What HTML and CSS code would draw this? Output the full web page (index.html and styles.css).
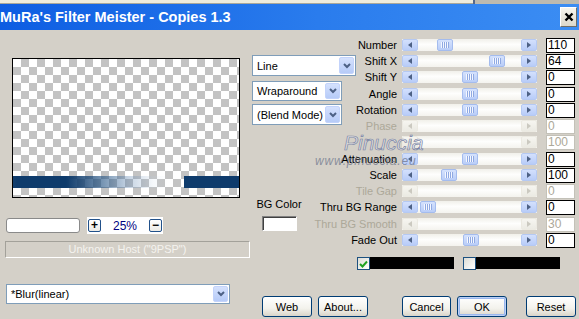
FILE: index.html
```html
<!DOCTYPE html>
<html lang="en">
<head>
  <meta charset="UTF-8" />
  <title>MuRa's Filter Meister - Copies 1.3</title>
  <link rel="stylesheet" href="styles.css">
</head>
<body>
<div class="topstrip"><span class="ts-left"></span><span class="ts-right"></span></div>

<header class="titlebar">
  <span class="title">MuRa's Filter Meister - Copies 1.3</span>
  <span class="close">
    <svg width="10" height="10" viewBox="0 0 10 10"><path d="M1.5 1.5 L8.5 8.5 M8.5 1.5 L1.5 8.5" stroke="#000" stroke-width="2.4" fill="none"/></svg>
  </span>
</header>

<main class="content">
  <div class="left">
    <div class="preview"><div class="bars"></div></div>

    <div class="zoomrow">
      <span class="zoomfield"></span>
      <span class="zoomctl">
        <span class="pm">+</span>
        <span class="pct">25%</span>
        <span class="pm">&minus;</span>
      </span>
    </div>

    <div class="status">Unknown Host ("9PSP")</div>

    <div class="select sel-blur">
      <span class="sel-text">*Blur(linear)</span>
      <span class="sel-arrow"><svg width="8" height="6" viewBox="0 0 8 6"><path d="M1 1 L4 4 L7 1" stroke="#4d6185" stroke-width="2" fill="none"/></svg></span>
    </div>
  </div>

  <div class="right">
    <div class="upper">
      <div class="mid">
        <div class="select sel-line">
          <span class="sel-text">Line</span>
          <span class="sel-arrow"><svg width="8" height="6" viewBox="0 0 8 6"><path d="M1 1 L4 4 L7 1" stroke="#4d6185" stroke-width="2" fill="none"/></svg></span>
        </div>
        <div class="select sel-wrap">
          <span class="sel-text">Wraparound</span>
          <span class="sel-arrow"><svg width="8" height="6" viewBox="0 0 8 6"><path d="M1 1 L4 4 L7 1" stroke="#4d6185" stroke-width="2" fill="none"/></svg></span>
        </div>
        <div class="select sel-blend">
          <span class="sel-text">(Blend Mode)</span>
          <span class="sel-arrow"><svg width="8" height="6" viewBox="0 0 8 6"><path d="M1 1 L4 4 L7 1" stroke="#4d6185" stroke-width="2" fill="none"/></svg></span>
        </div>

        <div class="bgcolor">
          <div class="bg-label">BG Color</div>
          <div class="swatch"></div>
        </div>
      </div>

      <div class="params">
        <div class="prow">
          <span class="plabel">Number</span>
          <span class="slider"><span class="sbtn sl"></span><span class="track"><span class="thumb" style="margin-left: 19px"></span></span><span class="sbtn sr"></span></span>
          <span class="val">110</span>
        </div>
        <div class="prow">
          <span class="plabel">Shift X</span>
          <span class="slider"><span class="sbtn sl"></span><span class="track"><span class="thumb" style="margin-left: 71px"></span></span><span class="sbtn sr"></span></span>
          <span class="val">64</span>
        </div>
        <div class="prow">
          <span class="plabel">Shift Y</span>
          <span class="slider"><span class="sbtn sl"></span><span class="track"><span class="thumb" style="margin-left: 44px"></span></span><span class="sbtn sr"></span></span>
          <span class="val">0</span>
        </div>
        <div class="prow">
          <span class="plabel">Angle</span>
          <span class="slider"><span class="sbtn sl"></span><span class="track"><span class="thumb" style="margin-left: 44px"></span></span><span class="sbtn sr"></span></span>
          <span class="val">0</span>
        </div>
        <div class="prow">
          <span class="plabel">Rotation</span>
          <span class="slider"><span class="sbtn sl"></span><span class="track"><span class="thumb" style="margin-left: 44px"></span></span><span class="sbtn sr"></span></span>
          <span class="val">0</span>
        </div>
        <div class="prow">
          <span class="plabel off">Phase</span>
          <span class="slider off"><span class="sbtn sl"></span><span class="track"></span><span class="sbtn sr"></span></span>
          <span class="val off">0</span>
        </div>
        <div class="prow">
          <span class="plabel off"></span>
          <span class="slider off"><span class="sbtn sl"></span><span class="track"></span><span class="sbtn sr"></span></span>
          <span class="val off">100</span>
        </div>
        <div class="prow">
          <span class="plabel">Attenuation</span>
          <span class="slider"><span class="sbtn sl"></span><span class="track"><span class="thumb" style="margin-left: 44px"></span></span><span class="sbtn sr"></span></span>
          <span class="val">0</span>
        </div>
        <div class="prow">
          <span class="plabel">Scale</span>
          <span class="slider"><span class="sbtn sl"></span><span class="track"><span class="thumb" style="margin-left: 23px"></span></span><span class="sbtn sr"></span></span>
          <span class="val">100</span>
        </div>
        <div class="prow">
          <span class="plabel off">Tile Gap</span>
          <span class="slider off"><span class="sbtn sl"></span><span class="track"></span><span class="sbtn sr"></span></span>
          <span class="val off">0</span>
        </div>
        <div class="prow">
          <span class="plabel">Thru BG Range</span>
          <span class="slider"><span class="sbtn sl"></span><span class="track"><span class="thumb" style="margin-left: 2px"></span></span><span class="sbtn sr"></span></span>
          <span class="val">0</span>
        </div>
        <div class="prow">
          <span class="plabel off">Thru BG Smooth</span>
          <span class="slider off"><span class="sbtn sl"></span><span class="track"></span><span class="sbtn sr"></span></span>
          <span class="val off">30</span>
        </div>
        <div class="prow">
          <span class="plabel">Fade Out</span>
          <span class="slider"><span class="sbtn sl"></span><span class="track"><span class="thumb" style="margin-left: 45px"></span></span><span class="sbtn sr"></span></span>
          <span class="val">0</span>
        </div>
      </div>
    </div>

    <div class="checks">
      <span class="cb on"><svg width="9" height="8" viewBox="0 0 9 8"><path d="M1 4 L3.5 6.5 L8 1.5" stroke="#21a121" stroke-width="2" fill="none"/></svg></span>
      <span class="swbar"></span>
      <span class="cb second"></span>
      <span class="swbar"></span>
    </div>

    <div class="buttons">
      <button class="btn">Web</button>
      <button class="btn about">About...</button>
      <button class="btn cancel">Cancel</button>
      <button class="btn ok">OK</button>
      <button class="btn reset">Reset</button>
    </div>
  </div>

  <div class="watermark">
    <div class="wm-big">Pinuccia</div>
    <div class="wm-small">www.pinuccia.eu</div>
  </div>
</main>
</body>
</html>
```

FILE: styles.css
```css
* { box-sizing: border-box; margin: 0; padding: 0; }
body {
  width: 579px;
  height: 319px;
  overflow: hidden;
  background: #d4d0c8;
  font-family: 'Liberation Sans', Arial, sans-serif;
  font-size: 11px;
  color: #000;
}

/* strip of the window behind */
.topstrip {
  height: 4px;
  display: flex;
}
.ts-left {
  width: 473px;
  background: #efecdc;
  border-bottom: 1px solid #a9a79a;
}
.ts-right {
  flex: 1;
  background: #bdbab0;
  border-left: 2px solid #56688a;
}

/* title bar */
.titlebar {
  height: 26px;
  background: linear-gradient(to right, #0d5de2, #2a7ced 55%, #3b8df3);
  color: #fff;
  display: flex;
  align-items: center;
  justify-content: space-between;
}
.title {
  font-weight: bold;
  font-size: 14.5px;
  white-space: nowrap;
}
.close {
  width: 17px;
  height: 20px;
  margin-right: 2px;
  background: linear-gradient(#f7f5ee, #dcd8cb);
  border: 1px solid #fff;
  border-right-color: #6f6d66;
  border-bottom-color: #6f6d66;
  display: flex;
  align-items: center;
  justify-content: center;
}

/* body */
.content {
  display: flex;
  height: 289px;
  position: relative;
}
.left {
  width: 252px;
}
.preview {
  margin: 28px 0 0 12px;
  width: 228px;
  height: 140px;
  border: 1px solid #000;
  background: conic-gradient(#c3c3c3 25%, #fff 0 50%, #c3c3c3 0 75%, #fff 0);
  background-size: 16px 16px;
}
.bars {
  margin-top: 117px;
  height: 12px;
  background: linear-gradient(to right,
    #14406f 0, #0e3b6c 4px, #0e3b6c 53px,
    rgba(14, 59, 108, 0.85) 66px,
    rgba(30, 80, 130, 0.6) 90px,
    rgba(90, 130, 175, 0.35) 115px,
    rgba(190, 210, 230, 0.15) 140px,
    rgba(255, 255, 255, 0) 155px,
    rgba(255, 255, 255, 0) 171px,
    #0e3b6c 171px, #0e3b6c 100%);
}

.zoomrow {
  margin: 19px 0 0 6px;
  height: 17px;
  display: flex;
  align-items: center;
}
.zoomfield {
  width: 74px;
  height: 15px;
  background: #fff;
  border: 1px solid #8a8a8a;
  border-radius: 3px;
}
.zoomctl {
  margin-left: 7px;
  width: 76px;
  height: 17px;
  background: #fff;
  display: flex;
  align-items: center;
  justify-content: space-between;
  padding: 0 1px;
}
.pm {
  width: 13px;
  height: 13px;
  border: 1px solid #21518a;
  border-radius: 2px;
  background: linear-gradient(#fff, #ecebe6);
  font-size: 12px;
  font-weight: bold;
  line-height: 10px;
  text-align: center;
}
.pct {
  color: #00007f;
  font-size: 12px;
}

.status {
  margin: 7px 0 0 5px;
  width: 245px;
  height: 17px;
  border-top: 1px solid #a3a19a;
  border-left: 1px solid #a3a19a;
  border-bottom: 1px solid #fff;
  border-right: 1px solid #fff;
  color: #f4f3ef;
  text-align: center;
  line-height: 15px;
}

/* combo boxes */
.select {
  display: flex;
  align-items: stretch;
  justify-content: space-between;
  background: #fff;
  border: 1px solid #7f9db9;
  padding: 1px;
  font-size: 11px;
  white-space: nowrap;
}
.sel-text {
  padding-left: 3px;
  align-self: center;
}
.sel-arrow {
  width: 15px;
  flex-shrink: 0;
  background: linear-gradient(#d5e1fd, #b6cbf8);
  border: 1px solid #c3d3fb;
  border-radius: 2px;
  display: flex;
  align-items: center;
  justify-content: center;
}
.sel-blur {
  margin: 26px 0 0 6px;
  width: 224px;
  height: 20px;
}

.right {
  flex: 1;
  display: flex;
  flex-direction: column;
}
.upper {
  display: flex;
  height: 218px;
}
.mid {
  width: 106px;
}
.sel-line {
  margin-top: 25px;
  width: 104px;
  height: 21px;
}
.sel-wrap {
  margin-top: 5px;
  width: 90px;
  height: 20px;
}
.sel-blend {
  margin-top: 3px;
  width: 90px;
  height: 21px;
}
.bgcolor {
  margin-top: 73px;
  width: 54px;
  text-align: center;
}
.bg-label {
  font-size: 11px;
  line-height: 13px;
}
.swatch {
  margin: 5px auto 0;
  width: 35px;
  height: 15px;
  background: #fff;
  border: 1px solid;
  border-color: #808080 #fff #fff #808080;
  box-shadow: inset 1px 1px 0 #404040;
}

/* parameter rows */
.params {
  margin-top: 7px;
  display: flex;
  flex-direction: column;
}
.prow {
  height: 16.25px;
  display: flex;
  align-items: flex-start;
}
.plabel {
  width: 40px;
  margin-right: 4px;
  padding-right: 1px;
  display: flex;
  justify-content: flex-end;
  white-space: nowrap;
  line-height: 16px;
}
.plabel.off {
  color: #aca899;
}
.slider {
  margin-top: 2px;
  width: 135px;
  height: 12px;
  display: flex;
  background: linear-gradient(#f1f0ea, #fefefd 45%, #f4f3ee);
}
.sbtn {
  width: 16px;
  height: 12px;
  background: linear-gradient(#d3e0fd, #b8ccf8);
  border: 1px solid #b5c9f3;
  border-radius: 2px;
  display: flex;
  align-items: center;
  justify-content: center;
}
.sbtn::before {
  content: "";
  border-top: 3px solid transparent;
  border-bottom: 3px solid transparent;
}
.sl::before { border-right: 4px solid #4d6185; }
.sr::before { border-left: 4px solid #4d6185; }
.slider.off .sbtn {
  background: linear-gradient(#f6f5f0, #ebeae3);
  border-color: #eceae2;
}
.slider.off .sl::before { border-right-color: #cbc9c0; }
.slider.off .sr::before { border-left-color: #cbc9c0; }
.track {
  flex: 1;
  display: flex;
  align-items: center;
}
.thumb {
  width: 16px;
  height: 12px;
  background: linear-gradient(#d5e2fd, #b9cdf8);
  border: 1px solid #a4bcee;
  border-radius: 2px;
  display: flex;
  align-items: center;
  justify-content: center;
}
.thumb::after {
  content: "";
  width: 8px;
  height: 6px;
  background: repeating-linear-gradient(to right, #f4f7ff 0 1px, #8fa9e2 1px 2px);
}
.val {
  margin: 1px 0 0 9px;
  width: 29px;
  height: 15px;
  background: #fff;
  border: 1px solid #000;
  font-size: 12px;
  line-height: 13px;
  padding-left: 1px;
}
.val.off {
  border-color: #c3c1b8;
  color: #aca899;
}

/* colour checks */
.checks {
  margin-top: 9px;
  padding-left: 105px;
  display: flex;
  height: 13px;
}
.cb {
  width: 13px;
  height: 13px;
  border: 1px solid #1c5180;
  background: linear-gradient(135deg, #dcdcd5, #fff);
  display: flex;
  align-items: center;
  justify-content: center;
}
.cb.second {
  margin-left: 9px;
}
.swbar {
  width: 84px;
  height: 12px;
  background: #000;
}

/* buttons */
.buttons {
  margin-top: 26px;
  padding-left: 10px;
  display: flex;
}
.btn {
  width: 50px;
  height: 21px;
  border: 1px solid #003c74;
  border-radius: 3px;
  background: linear-gradient(#fff, #f3f2ec 60%, #d9d5c9);
  font-family: 'Liberation Sans', Arial, sans-serif;
  font-size: 11px;
  color: #000;
}
.btn.about { margin-left: 6px; }
.btn.cancel { margin-left: 34px; width: 49px; }
.btn.ok {
  margin-left: 6px;
  box-shadow: inset 0 0 0 1px #bcd0f5, inset 0 0 0 2px #9ab7ee;
}
.btn.reset { margin-left: 19px; }

/* watermark over the form */
.watermark {
  position: absolute;
  left: 315px;
  top: 102px;
  pointer-events: none;
}
.wm-big {
  margin-left: 29px;
  font-size: 21px;
  font-style: italic;
  color: rgba(235, 238, 246, 0.55);
  -webkit-text-stroke: 0.7px #7a84a4;
  line-height: 21px;
}
.wm-small {
  margin-top: 1px;
  font-size: 12px;
  font-style: italic;
  color: rgba(110, 118, 140, 0.75);
  letter-spacing: 0.8px;
}
```
